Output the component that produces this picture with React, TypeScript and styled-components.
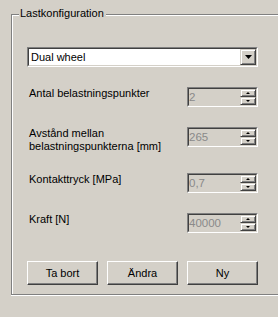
import React from 'react'
import styled, { createGlobalStyle } from 'styled-components'

const GlobalStyle = createGlobalStyle`
  html, body {
    margin: 0;
    padding: 0;
    background: #d4d0c8;
    overflow: hidden;
  }
  body {
    font-family: "Liberation Sans", Arial, sans-serif;
    font-size: 11px;
    color: #000;
  }
`

const Page = styled.div`
  width: 278px;
  height: 317px;
  padding-top: 14px;
  box-sizing: border-box;
`

const Group = styled.div`
  position: relative;
  margin-left: 11px;
  height: 281px;
  box-sizing: border-box;
  border-top: 1px solid #808080;
  border-left: 1px solid #808080;
  border-bottom: 1px solid #808080;
  box-shadow: inset 1px 1px 0 #fff, 0 1px 0 #fff;
  padding: 32px 0 0 15px;
`

const Legend = styled.span`
  position: absolute;
  top: -8px;
  left: 7px;
  padding: 0 2px 0 1px;
  background: #d4d0c8;
  line-height: 13px;
`

const Sunken = styled.div<{ $w: number; $bg: string }>`
  position: relative;
  width: ${p => p.$w}px;
  height: 20px;
  box-sizing: border-box;
  border-top: 1px solid #808080;
  border-left: 1px solid #808080;
  border-right: 1px solid #fff;
  border-bottom: 1px solid #fff;
  background: ${p => p.$bg};
  display: flex;
  align-items: stretch;
`

const SunkenInner = styled.div`
  flex: 1;
  display: flex;
  align-items: stretch;
  border-top: 1px solid #404040;
  border-left: 1px solid #404040;
  border-right: 1px solid #d4d0c8;
  border-bottom: 1px solid #d4d0c8;
`

const FieldText = styled.div<{ $disabled?: boolean }>`
  flex: 1;
  padding-left: ${p => (p.$disabled ? 0 : 2)}px;
  line-height: 16px;
  color: ${p => (p.$disabled ? '#8a8a8a' : '#000')};
  font-size: ${p => (p.$disabled ? 11.5 : 11)}px;
`

const Raised = styled.div<{ $h: number }>`
  width: 16px;
  height: ${p => p.$h}px;
  box-sizing: border-box;
  background: #d4d0c8;
  border-top: 1px solid #d4d0c8;
  border-left: 1px solid #d4d0c8;
  border-right: 1px solid #404040;
  border-bottom: 1px solid #404040;
  box-shadow: inset 1px 1px 0 #fff, inset -1px -1px 0 #808080;
  display: flex;
  align-items: center;
  justify-content: center;
`

const SpinCol = styled.div`
  display: flex;
  flex-direction: column;
`

const Combo = styled.div`
  margin-bottom: 20px;
`

const Rows = styled.div`
  display: flex;
  flex-direction: column;
  gap: 20px;
  width: 231px;
`

const Row = styled.div`
  display: flex;
  justify-content: space-between;
  align-items: flex-start;
`

const Label = styled.div`
  padding-left: 2px;
  line-height: 13px;
`

const Buttons = styled.div`
  display: flex;
  gap: 9px;
  margin-top: 28px;
`

const Button = styled.div`
  width: 71px;
  height: 24px;
  box-sizing: border-box;
  border-top: 1px solid #fff;
  border-left: 1px solid #fff;
  border-right: 1px solid #404040;
  border-bottom: 1px solid #404040;
  box-shadow: inset -1px -1px 0 #808080;
  display: flex;
  align-items: center;
  justify-content: center;
  line-height: 13px;
`

const Arrow = ({ dir, w, h }: { dir: 'up' | 'down'; w: number; h: number }) => {
  const pts = dir === 'down' ? `0,0 ${w},0 ${w / 2},${h}` : `0,${h} ${w},${h} ${w / 2},0`
  return (
    <svg width={w} height={h} viewBox={`0 0 ${w} ${h}`} style={{ display: 'block' }}>
      <polygon points={pts} fill="#000" />
    </svg>
  )
}

const Spin = ({ value }: { value: string }) => (
  <Sunken $w={71} $bg="#d4d0c8">
    <SunkenInner>
      <FieldText $disabled>{value}</FieldText>
      <SpinCol>
        <Raised $h={8}>
          <Arrow dir="up" w={4} h={2} />
        </Raised>
        <Raised $h={8}>
          <Arrow dir="down" w={4} h={2} />
        </Raised>
      </SpinCol>
    </SunkenInner>
  </Sunken>
)

const fields = [
  { label: 'Antal belastningspunkter', value: '2' },
  { label: 'Avstånd mellan\nbelastningspunkterna [mm]', value: '265' },
  { label: 'Kontakttryck [MPa]', value: '0,7' },
  { label: 'Kraft [N]', value: '40000' },
]

export default function App() {
  return (
    <Page>
      <GlobalStyle />
      <Group>
        <Legend>Lastkonfiguration</Legend>
        <Combo>
          <Sunken $w={231} $bg="#fff">
            <SunkenInner>
              <FieldText>Dual wheel</FieldText>
              <Raised $h={16}>
                <Arrow dir="down" w={7} h={4} />
              </Raised>
            </SunkenInner>
          </Sunken>
        </Combo>
        <Rows>
          {fields.map(f => (
            <Row key={f.label}>
              <Label>
                {f.label.split('\n').map(l => (
                  <div key={l}>{l}</div>
                ))}
              </Label>
              <Spin value={f.value} />
            </Row>
          ))}
        </Rows>
        <Buttons>
          <Button>Ta bort</Button>
          <Button>Ändra</Button>
          <Button>Ny</Button>
        </Buttons>
      </Group>
    </Page>
  )
}
